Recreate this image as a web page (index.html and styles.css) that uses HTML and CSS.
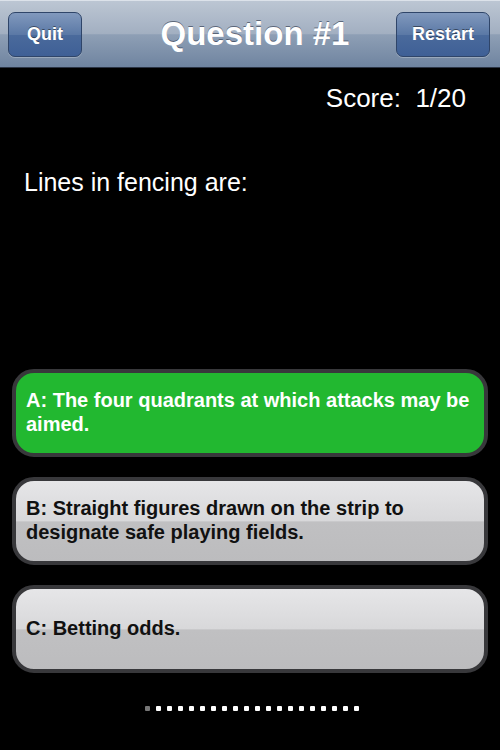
FILE: index.html
```html
<!DOCTYPE html>
<html>
<head>
<meta charset="utf-8">
<link rel="stylesheet" href="styles.css">
</head>
<body>
<div class="nav">
  <div class="btn btn-quit">Quit</div>
  <div class="title">Question #1</div>
  <div class="btn btn-restart">Restart</div>
</div>
<div class="score">Score:&nbsp; 1/20</div>
<div class="question">Lines in fencing are:</div>
<div class="answers">
  <div class="answer correct"><div class="inner">A: The four quadrants at which attacks may be aimed.</div></div>
  <div class="answer"><div class="inner">B: Straight figures drawn on the strip to designate safe playing fields.</div></div>
  <div class="answer"><div class="inner">C: Betting odds.</div></div>
</div>
<div class="dots">
  <span class="dot current"></span><span class="dot"></span><span class="dot"></span><span class="dot"></span><span class="dot"></span><span class="dot"></span><span class="dot"></span><span class="dot"></span><span class="dot"></span><span class="dot"></span><span class="dot"></span><span class="dot"></span><span class="dot"></span><span class="dot"></span><span class="dot"></span><span class="dot"></span><span class="dot"></span><span class="dot"></span><span class="dot"></span><span class="dot"></span>
</div>
</body>
</html>
```
FILE: styles.css
```css
html, body {
  margin: 0;
  padding: 0;
  background: #000;
  width: 500px;
  height: 750px;
  overflow: hidden;
  font-family: "Liberation Sans", Arial, sans-serif;
}
.nav {
  box-sizing: border-box;
  height: 68px;
  border-top: 1px solid #dce2ea;
  border-bottom: 1px solid #2b3444;
  background: linear-gradient(to bottom, #bcc6d3 0%, #a2afc1 50%, #8e9fb5 51%, #6f84a0 100%);
  display: flex;
  align-items: center;
  justify-content: space-between;
  padding: 0 10px 0 8px;
}
.btn {
  height: 45px;
  box-sizing: border-box;
  border: 1px solid #2f4569;
  border-radius: 7px;
  background: linear-gradient(to bottom, #8199bd 0%, #5b79a6 50%, #4a6a9c 51%, #3f6096 100%);
  color: #fff;
  font-weight: bold;
  font-size: 18px;
  display: flex;
  align-items: center;
  justify-content: center;
  text-shadow: 0 -1px 0 rgba(0,0,0,0.45);
  box-shadow: 0 1px 0 rgba(255,255,255,0.25);
}
.btn-quit { width: 74px; }
.btn-restart { width: 94px; }
.title {
  color: #fff;
  font-weight: bold;
  font-size: 33px;
  text-shadow: 0 -1px 0 rgba(40,50,70,0.6);
  margin-left: 32px;
}
.score {
  color: #fff;
  font-size: 26px;
  line-height: 30px;
  text-align: right;
  padding: 15px 34px 0 0;
}
.question {
  color: #fff;
  font-size: 25px;
  line-height: 30px;
  padding-left: 24px;
  margin-top: 54px;
}
.answers {
  margin-top: 172px;
  display: flex;
  flex-direction: column;
  gap: 20px;
  padding: 0 12px;
}
.answer {
  height: 88px;
  box-sizing: border-box;
  border: 4px solid #38383b;
  border-radius: 22px;
  background: linear-gradient(to bottom, #e6e6e8 0%, #d8d8da 50%, #c0c0c2 51%, #bcbcbe 100%);
  display: flex;
  align-items: center;
  padding: 0 10px;
}
.answer.correct {
  background: #22b830;
}
.inner {
  font-weight: bold;
  font-size: 20px;
  line-height: 24px;
  color: #111;
  margin-top: -3px;
}
.correct .inner {
  color: #fff;
}
.dots {
  margin-top: 33px;
  display: flex;
  justify-content: center;
  gap: 6px;
  padding-left: 4px;
}
.dot {
  width: 5px;
  height: 5px;
  background: #fff;
  border-radius: 1px;
}
.dot.current {
  background: #777;
}
```
